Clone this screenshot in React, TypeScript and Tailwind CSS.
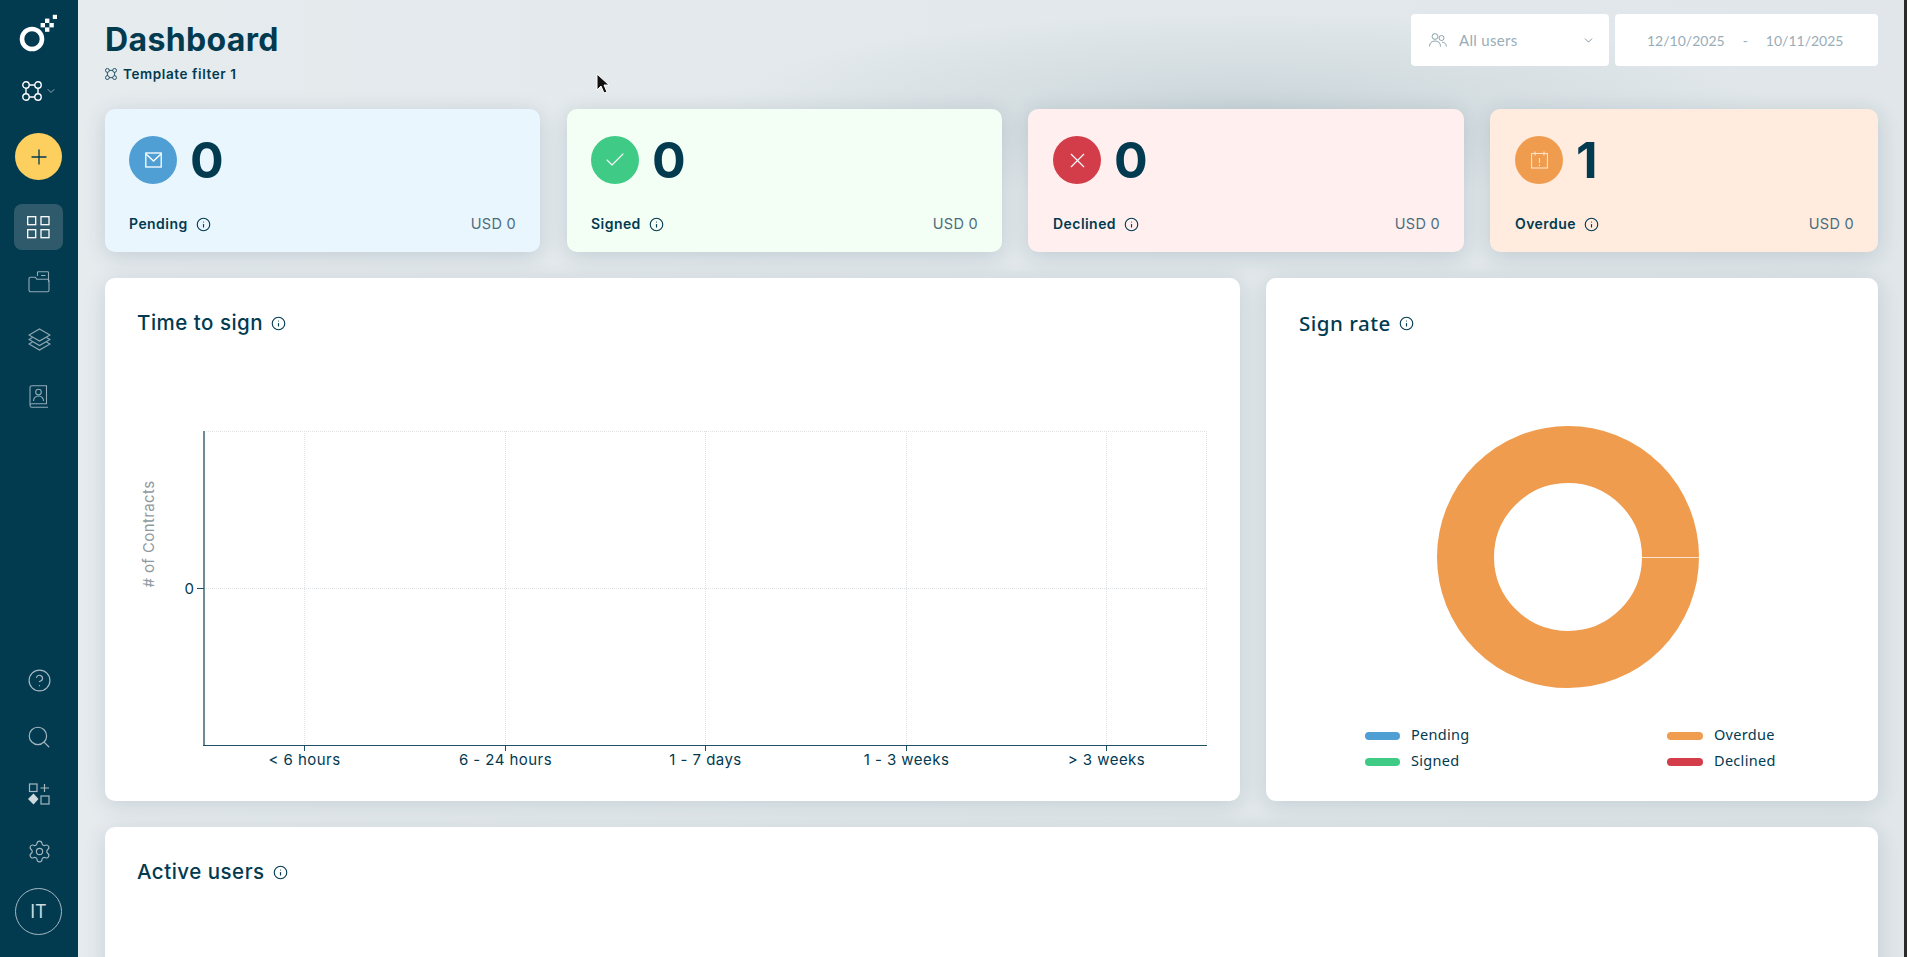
import { Check, ChevronDown, CircleHelp, Info, Plus, Search, Settings, X } from "lucide-react";
import type { ReactNode } from "react";

function Logo() {
  return (
    <svg width="44" height="40" viewBox="17 14 44 40" className="block">
      <circle cx="32" cy="39" r="10" fill="none" stroke="#fff" strokeWidth="4.6" />
      <rect x="52.8" y="14.8" width="4.2" height="4.2" fill="#fff" />
      <rect x="45" y="18.6" width="4.4" height="4.4" fill="#fff" />
      <rect x="40.6" y="23" width="4.4" height="4.4" fill="#fff" />
      <rect x="49.4" y="23" width="4.4" height="4.4" fill="#fff" />
      <rect x="45" y="27.4" width="4.4" height="4.4" fill="#fff" />
    </svg>
  );
}

function TemplateIcon({ size, color }: { size: number; color: string }) {
  return (
    <svg width={size} height={size} viewBox="0 0 20 20" fill="none" stroke={color} strokeWidth="1.4">
      <circle cx="4" cy="4" r="3.2" />
      <circle cx="16" cy="4" r="3.2" />
      <circle cx="4" cy="16" r="3.2" />
      <circle cx="16" cy="16" r="3.2" />
      <path d="M7.2 4h5.600M7.200 16h5.600M4 7.200v5.600M16 7.200v5.600" />
    </svg>
  );
}

function GridIcon() {
  return (
    <svg width="23" height="23" viewBox="0 0 23 23" fill="none" stroke="#fff" strokeWidth="1.3">
      <rect x="0.7" y="0.7" width="8" height="8" />
      <rect x="14" y="0.7" width="8" height="8" />
      <rect x="0.7" y="13.7" width="8" height="8" />
      <rect x="14" y="13.7" width="8" height="8" />
    </svg>
  );
}

function FolderIcon() {
  return (
    <svg width="22" height="22" viewBox="0 0 22 22" fill="none" stroke="#93abb6" strokeWidth="1.1">
      <path d="M9.500 5V1.500c0-.5.300-.8.800-.8h9.400c.5 0 .8.300.8.800V11" />
      <path d="M13 4.500h4.500" />
      <path d="M1 9V7.500c0-.8.500-1.300 1.300-1.300h5l1.500 2h10.900c.8 0 1.300.5 1.300 1.300v9.700c0 1-.6 1.600-1.500 1.600H2.800c-1.100 0-1.800-.7-1.800-1.800z" />
    </svg>
  );
}

function LayersIcon() {
  return (
    <svg width="23" height="23" viewBox="0 0 23 23" fill="none" stroke="#93abb6" strokeWidth="1.1">
      <path d="M11.500 1 22 7l-10.500 6L1 7z" />
      <path d="M4.500 9.500 1 11.500l10.500 6 10.500-6-3.500-2" />
      <path d="M4.500 14 1 16l10.500 6L22 16l-3.500-2" />
    </svg>
  );
}

function ContactIcon() {
  return (
    <svg width="20" height="23" viewBox="0 0 20 23" fill="none" stroke="#93abb6" strokeWidth="1.1">
      <path d="M3 .7h14.500v18H3c-1.200 0-2 .8-2 1.700V2.500C1 1.400 1.800.7 3 .7z" />
      <path d="M1 20.500c0 1 .8 1.800 2 1.800h16" />
      <circle cx="9.500" cy="7" r="2.800" />
      <path d="M4.500 16c0-3 2-5 5-5s5 2 5 5" />
    </svg>
  );
}

function WidgetsIcon() {
  return (
    <svg width="22" height="22" viewBox="0 0 22 22" fill="none" stroke="#a5b8c1" strokeWidth="1.2">
      <rect x="1.500" y="1" width="7.500" height="7.500" />
      <path d="M16.500 1v8M12.500 5h8.500" />
      <path d="M5.500 10.500 10.500 16l-5 5.500L0 16z" fill="#cfd9de" stroke="none" />
      <rect x="13" y="13" width="8" height="8" />
    </svg>
  );
}

function Envelope() {
  return (
    <svg width="17" height="16" viewBox="0 0 17 16" fill="none" stroke="#fff" strokeWidth="1.300">
      <rect x="0.800" y="1" width="15.400" height="14" />
      <path d="m1 2 7.500 7L16 2" />
    </svg>
  );
}

function CalendarAlert() {
  return (
    <svg width="17" height="18" viewBox="0 0 17 18" fill="none" stroke="#ffe2c4" strokeWidth="1.100">
      <rect x="0.600" y="2.500" width="15.800" height="14.500" />
      <path d="M4 .5v4M13 .5v4" />
      <path d="M8.500 7v5M8.500 13.500V15" />
    </svg>
  );
}

function UsersIcon() {
  return (
    <svg width="18" height="14" viewBox="0 0 18 14" fill="none" stroke="#7f98a5" strokeWidth="0.900">
      <circle cx="6" cy="3.500" r="2.900" />
      <path d="M.500 13.500c0-3.500 2-5.500 5.500-5.500s5.500 2 5.500 5.500" />
      <circle cx="12.500" cy="5" r="2.500" />
      <path d="M13 9.200c2.500 0 4.300 1.500 4.300 4.300" />
    </svg>
  );
}

function NavItem({ children, className }: { children: ReactNode; className: string }) {
  return <div className={`flex items-center justify-center ${className}`}>{children}</div>;
}

function StatCard({
  box,
  bg,
  circle,
  icon,
  value,
  label,
}: {
  box: string;
  bg: string;
  circle: string;
  icon: ReactNode;
  value: string;
  label: string;
}) {
  return (
    <div className={`${box} ${bg} h-[143px] rounded-[10px] pr-6 pt-[27px] shadow-[0_4px_22px_rgba(0,58,79,0.16)]`}>
      <div className="flex items-center gap-[13px]">
        <div className={`${circle} flex size-12 items-center justify-center rounded-full`}>{icon}</div>
        <span className="text-[50px] leading-12 font-bold text-[#023a50]">{value}</span>
      </div>
      <div className="mt-[28px] flex items-center justify-between text-[#023a50]">
        <div className="flex items-center gap-2">
          <span className="text-sm leading-6 font-semibold tracking-[0.45px]">{label}</span>
          <Info size={15} strokeWidth={1.800} />
        </div>
        <span className="text-[14.500px] leading-6 tracking-[0.3px] text-[#4c6d7e]">USD 0</span>
      </div>
    </div>
  );
}

function CardTitle({ children }: { children: string }) {
  return (
    <div className="flex h-6 items-center gap-2 pl-[33px] text-[20.500px] font-medium tracking-[0.5px] text-[#023a50]">
      <span className="-ml-px">{children}</span>
      <Info size={15} strokeWidth={1.800} className="mt-px" />
    </div>
  );
}

function TimeChart() {
  const grid = [199, 400, 600, 801, 1001];
  const labels = ["< 6 hours", "6 - 24 hours", "1 - 7 days", "1 - 3 weeks", "> 3 weeks"];
  return (
    <svg width="1135" height="466" viewBox="0 0 1135 466" className="block">
      <g stroke="#dfe3e6" strokeWidth="1" strokeDasharray="1 1">
        {grid.map((x) => (
          <line key={x} x1={x + 0.5} y1="96" x2={x + 0.5} y2="410" />
        ))}
        <line x1="99" y1="96.500" x2="1102" y2="96.500" />
        <line x1="99" y1="253.500" x2="1102" y2="253.500" />
        <line x1="1101.500" y1="96" x2="1101.500" y2="410" />
      </g>
      <line x1="99" y1="96" x2="99" y2="410" stroke="#6f8a99" strokeWidth="2" />
      <line x1="98" y1="410.500" x2="1102" y2="410.500" stroke="#1f4f63" strokeWidth="1" />
      <line x1="92" y1="253.500" x2="99" y2="253.500" stroke="#1f4f63" strokeWidth="1" />
      {grid.map((x, i) => (
        <g key={x}>
          <line x1={x + 0.5} y1="410" x2={x + 0.5} y2="416" stroke="#1f4f63" strokeWidth="1" />
          <text x={x + 0.5} y="430" textAnchor="middle" fontSize="15" letterSpacing="0.45" fill="#023a50">
            {labels[i]}
          </text>
        </g>
      ))}
      <text x="89" y="259" textAnchor="end" fontSize="15" fill="#023a50">
        0
      </text>
      <text
        transform="translate(49 199) rotate(-90)"
        textAnchor="middle"
        fontSize="15"
        letterSpacing="0.4"
        fill="#8f9a9f"
      >
        # of Contracts
      </text>
    </svg>
  );
}

function Donut() {
  return (
    <svg width="612" height="375" viewBox="0 0 612 375" className="block">
      <circle cx="302" cy="222" r="102.500" fill="none" stroke="#ef9c4f" strokeWidth="57" />
      <line x1="376" y1="222.500" x2="433" y2="222.500" stroke="#fbe4cd" strokeWidth="1" />
    </svg>
  );
}

function LegendItem({ color, label, width }: { color: string; label: string; width: string }) {
  return (
    <div className="flex h-5 items-center gap-[11px] text-[14.500px] tracking-[0.3px] text-[#023a50]">
      <span className={`${color} ${width} h-2 rounded-full`} />
      <span className="-mt-[3px] font-['Noto_Sans',sans-serif]">{label}</span>
    </div>
  );
}

export default function App() {
  return (
    <div className="flex h-[957px] overflow-hidden font-['Inter',sans-serif]">
      <aside className="flex w-[78px] shrink-0 flex-col items-center bg-[#023a50]">
        <NavItem className="mt-[14px] h-10">
          <Logo />
        </NavItem>
        <NavItem className="mt-[27px] h-5 gap-[3px]">
          <TemplateIcon size={20} color="#fff" />
          <ChevronDown size={12} strokeWidth={1.300} color="#dbe3e7" />
        </NavItem>
        <NavItem className="mt-[32px] mr-px size-[47px] rounded-full bg-[#fdcf5f]">
          <Plus size={24} strokeWidth={1.300} color="#023a50" />
        </NavItem>
        <NavItem className="mt-[24px] mr-px h-[46px] w-[49px] rounded-lg bg-[#2f5a6b]">
          <GridIcon />
        </NavItem>
        <NavItem className="mt-[20px] h-6">
          <FolderIcon />
        </NavItem>
        <NavItem className="mt-[33px] h-6">
          <LayersIcon />
        </NavItem>
        <NavItem className="mt-[33px] h-6">
          <ContactIcon />
        </NavItem>
        <div className="flex-1" />
        <NavItem className="h-6">
          <CircleHelp size={25} strokeWidth={1.150} color="#a5b8c1" />
        </NavItem>
        <NavItem className="mt-[33px] h-6">
          <Search size={26} strokeWidth={1.100} color="#a5b8c1" />
        </NavItem>
        <NavItem className="mt-[33px] h-6">
          <WidgetsIcon />
        </NavItem>
        <NavItem className="mt-[33px] h-6">
          <Settings size={25} strokeWidth={1.100} color="#a5b8c1" />
        </NavItem>
        <div className="mt-[25px] mr-px mb-[22px] flex size-[47px] items-center justify-center rounded-full border border-[#a5b8c1] text-[18px] text-[#cfd9de]">
          IT
        </div>
      </aside>

      <main className="relative flex flex-1 flex-col gap-[26px] bg-[radial-gradient(ellipse_520px_95px_at_1170px_108px,#cbd6da,transparent),linear-gradient(90deg,#e6ebee,#e2e8eb_55%,#e0e6e9)] pl-[27px] pr-[26px]">
        <header className="-mb-[26px] flex h-[109px] shrink-0 justify-between pt-[14px]">
          <div className="pt-2">
            <h1 className="text-[32px] leading-[36px] font-bold tracking-[0.35px] text-[#023a50]">Dashboard</h1>
            <div className="mt-[6px] flex items-center gap-[6px] text-[13.500px] font-semibold tracking-[0.6px] text-[#023a50]">
              <TemplateIcon size={12} color="#023a50" />
              <span>Template filter 1</span>
            </div>
          </div>
          <div className="flex h-[52px] gap-[6px] font-['Lato',sans-serif] text-[#98adb8]">
            <div className="flex w-[198px] items-center rounded-[4px] bg-white pl-[18px] pr-[14px] text-[15px]">
              <UsersIcon />
              <span className="ml-3 flex-1 tracking-[0.3px]">All users</span>
              <ChevronDown size={13} strokeWidth={1.300} color="#4c6d7e" />
            </div>
            <div className="flex w-[263px] items-center rounded-[4px] bg-white pl-[32px] text-[14px]">
              <span>12/10/2025</span>
              <span className="mx-[18px]">-</span>
              <span>10/11/2025</span>
            </div>
          </div>
        </header>

        <section className="flex shrink-0 gap-[26px]">
          <StatCard box="mr-px w-[435px] pl-6" bg="bg-[#e9f6fe]" circle="bg-[#4f9fd5]" icon={<Envelope />} value="0" label="Pending" />
          <StatCard
            box="w-[435px] pl-6"
            bg="bg-[#f3fff5]"
            circle="bg-[#3fcb86]"
            icon={<Check size={24} strokeWidth={1.100} color="#fff" />}
            value="0"
            label="Signed"
          />
          <StatCard
            box="w-[436px] pl-[25px]"
            bg="bg-[#fff0ef]"
            circle="bg-[#d33c49]"
            icon={<X size={25} strokeWidth={1.100} color="#fff" />}
            value="0"
            label="Declined"
          />
          <StatCard box="w-[388px] pl-[25px]" bg="bg-[#ffecdf]" circle="bg-[#ef9c4f]" icon={<CalendarAlert />} value="1" label="Overdue" />
        </section>

        <section className="flex shrink-0 gap-[26px]">
          <div className="h-[523px] w-[1135px] rounded-[10px] bg-white pt-[33px] shadow-[0_4px_22px_rgba(0,58,79,0.14)]">
            <CardTitle>Time to sign</CardTitle>
            <TimeChart />
          </div>
          <div className="h-[523px] w-[612px] rounded-[10px] bg-white pt-[33px] shadow-[0_4px_22px_rgba(0,58,79,0.14)]">
            <div className="pl-px font-['Noto_Sans',sans-serif]">
              <CardTitle>Sign rate</CardTitle>
            </div>
            <Donut />
            <div className="mt-4 grid grid-cols-[302px_1fr] gap-y-[6px] pl-[99px]">
              <LegendItem color="bg-[#4f9fd5]" label="Pending" width="w-[35px]" />
              <LegendItem color="bg-[#ef9c4f]" label="Overdue" width="w-[36px]" />
              <LegendItem color="bg-[#3fcb86]" label="Signed" width="w-[35px]" />
              <LegendItem color="bg-[#d33c49]" label="Declined" width="w-[36px]" />
            </div>
          </div>
        </section>

        <section className="h-[300px] shrink-0 rounded-[10px] bg-white pt-[33px] shadow-[0_4px_22px_rgba(0,58,79,0.14)]">
          <CardTitle>Active users</CardTitle>
        </section>

        <svg width="13" height="21" viewBox="0 0 13 21" className="absolute top-[73px] left-[518px]">
          <path d="M1 1v16l4-4 3 7 3-1-3-7h5z" fill="#111" stroke="#fff" strokeWidth="1" />
        </svg>
      </main>
      <div className="w-[3px] shrink-0 bg-[#2b2b2b]" />
    </div>
  );
}
